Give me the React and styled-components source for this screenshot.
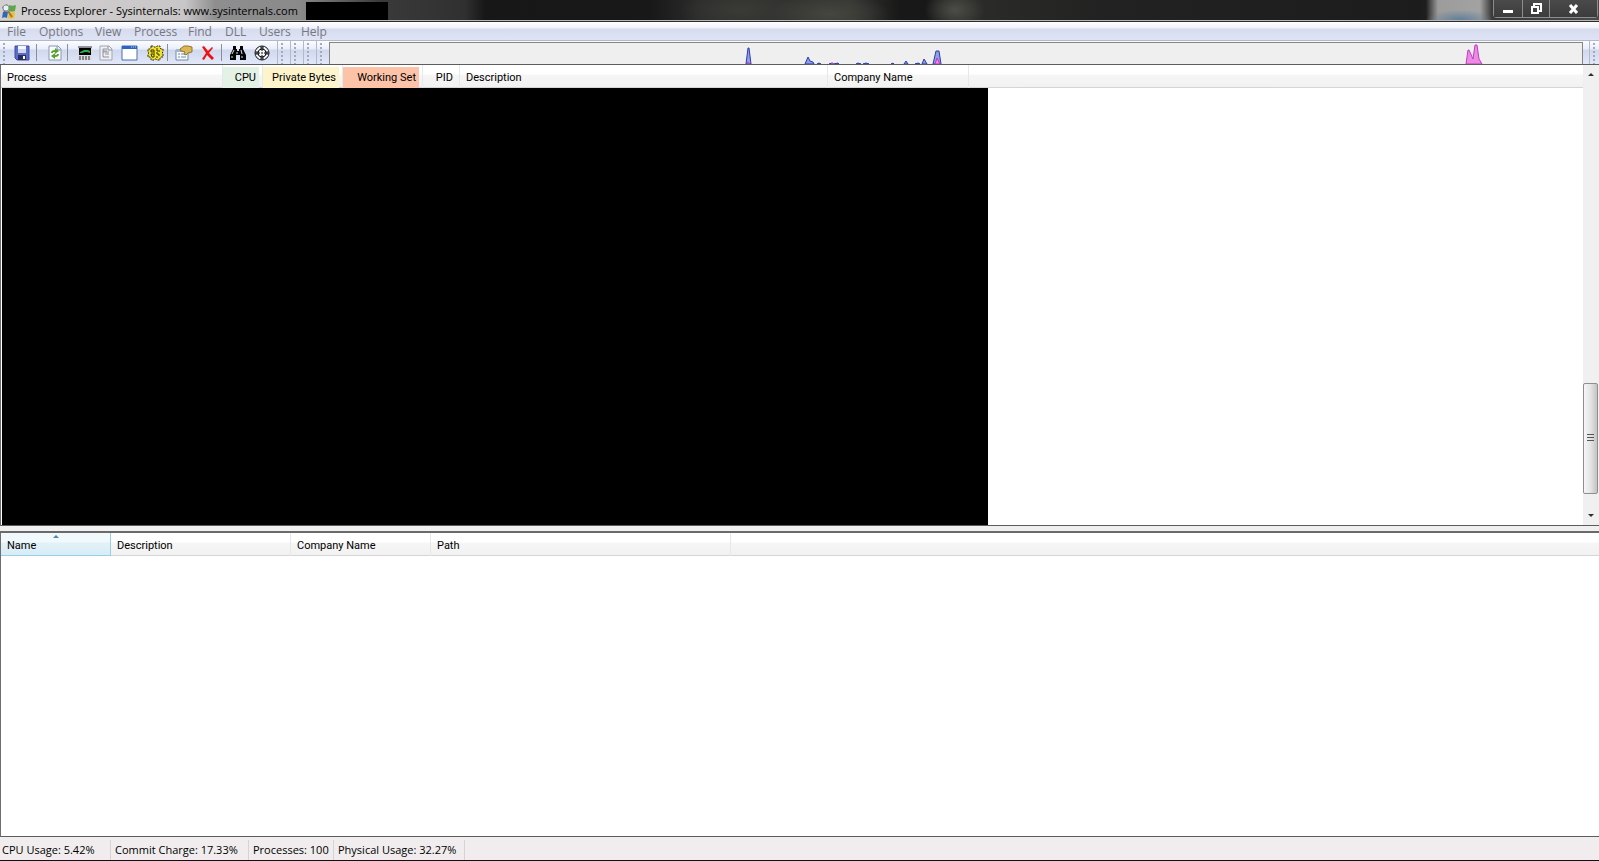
import React from "react";
import styled, { createGlobalStyle } from "styled-components";

const GlobalStyle = createGlobalStyle`
    * {
        box-sizing: border-box;
    }
    body {
        margin: 0;
        background: #ffffff;
        color: #000000;
        font-family: "Open Sans", "Noto Sans", sans-serif;
    }
    button {
        font: inherit;
        color: inherit;
        border: 0;
        padding: 0;
        background: none;
    }
`;

const menus = ["File", "Options", "View", "Process", "Find", "DLL", "Users", "Help"];

const processColumns = [
    { label: "Process", width: 222 },
    { label: "CPU", width: 40, tint: "#e4f1e5", right: true },
    { label: "Private Bytes", width: 80, tint: "#fdf4cb", right: true },
    { label: "Working Set", width: 80, tint: "#fcc3a8", right: true },
    { label: "PID", width: 37, right: true },
    { label: "Description", width: 368 },
    { label: "Company Name", width: 141 },
];

const dllColumns = [
    { label: "Name", width: 110, sorted: true },
    { label: "Description", width: 180 },
    { label: "Company Name", width: 140 },
    { label: "Path", width: 300 },
];

const stats = ["CPU Usage: 5.42%", "Commit Charge: 17.33%", "Processes: 100", "Physical Usage: 32.27%"];

const AppIcon = () => (
    <svg width="16" height="16" viewBox="0 0 16 16" aria-hidden="true">
        <path d="M1 4l5-3 3 5-6 3z" fill="#d85a3c" />
        <path d="M8 2c2 1 4 1 7 0l-1 6c-2 1-4 1-6 0z" fill="#5fa644" />
        <path d="M2 9c2-1 3-1 5 0l-1 6c-2-1-3-1-5 0z" fill="#2f69b4" />
        <path d="M8 9c2 1 4 1 6 0l-1 6c-2 1-4 1-6 0z" fill="#ecc02f" />
        <circle cx="5" cy="5" r="3" fill="#e4f3f8" stroke="#7e979f" />
        <path d="M7 8l4 6" stroke="#a8742a" strokeWidth="2" />
    </svg>
);

const SaveIcon = () => (
    <svg width="16" height="16" viewBox="0 0 16 16" aria-hidden="true">
        <path d="M1 1h14v14H3l-2-2z" fill="#5a6cc9" stroke="#3f4ba3" />
        <path d="M4 1h8v7H4z" fill="#cfd5f1" />
        <path d="M4 1h8v3H4z" fill="#f5f7ff" />
        <path d="M4 10h8v5H4z" fill="#2a2d5c" />
        <path d="M9 11h2v3H9z" fill="#ffffff" />
    </svg>
);

const RefreshIcon = () => (
    <svg width="16" height="16" viewBox="0 0 16 16" aria-hidden="true">
        <path d="M2 1h9l3 3v11H2z" fill="#fbfdfd" stroke="#8799ad" />
        <path d="M10 1v4h4" fill="#dce5ee" stroke="#8799ad" />
        <path d="M5 8c0-2 1-2 3-2" fill="none" stroke="#58a32e" strokeWidth="2" />
        <path d="M8 3l4 3-4 3z" fill="#58a32e" />
        <path d="M11 9c0 2-1 2-3 2" fill="none" stroke="#58a32e" strokeWidth="2" />
        <path d="M8 8v6l-4-3z" fill="#58a32e" />
    </svg>
);

const MonitorIcon = () => (
    <svg width="16" height="16" viewBox="0 0 16 16" aria-hidden="true">
        <path d="M1 2h14v13H1z" fill="#d9dbe0" />
        <path d="M2 3h12v7H2z" fill="#000000" />
        <path d="M1 2h14" stroke="#3a3d44" />
        <path d="M3 7l2-1 2-1h4l2 1v2l-3-1H8L5 8H3z" fill="#22b14c" />
        <path d="M2 12h12M2 14h12" stroke="#26282d" strokeDasharray="2 1" />
    </svg>
);

const TreeIcon = () => (
    <svg width="16" height="16" viewBox="0 0 16 16" aria-hidden="true">
        <path d="M2 1h9l3 3v11H2z" fill="#eef0f5" stroke="#a4a7b0" />
        <path d="M10 1v4h4M5 4h4M5 4v8M5 7h6M7 9h4M5 12h6M5 6h4" fill="none" stroke="#8d9098" />
    </svg>
);

const WindowIcon = () => (
    <svg width="17" height="16" viewBox="0 0 17 16" aria-hidden="true">
        <path d="M1 1h15v14H1z" fill="#ffffff" stroke="#4a6ea8" />
        <path d="M1 1h15v3H1z" fill="#2f63c0" />
        <path d="M10 2h5" stroke="#b7d0f6" strokeDasharray="1 1" />
    </svg>
);

const GearIcon = () => (
    <svg width="17" height="16" viewBox="0 0 17 16" aria-hidden="true">
        <path
            d="M4 1h2l1 1h2l1-1h3v2l1 1h2v3l-1 1 1 1v3h-2l-1 1v2h-3l-1-1H8l-1 1H4v-2l-1-1H1V9l1-1-1-1V4h2l1-1z"
            fill="#efe12b"
            stroke="#2b280c"
            strokeDasharray="2 1"
        />
        <path d="M4 5h3v2H4zM4 9h3v3H5zM10 3v3h3M9 8h2v2h2M9 12h2M7 8h1" fill="none" stroke="#3a350e" />
    </svg>
);

const PropertiesIcon = () => (
    <svg width="18" height="16" viewBox="0 0 18 16" aria-hidden="true">
        <path d="M1 5h12v10H1z" fill="#f7fafc" stroke="#7189a3" />
        <path d="M1 5h12v2H1z" fill="#9fb6cf" />
        <path d="M3 9h2M6 9h5M3 12h2M6 12h5" stroke="#6b8cb0" />
        <path d="M5 4l4-3h4l4 1v5l-4 1-2 2-2-1 1-2-4-1z" fill="#dab754" stroke="#94762f" />
    </svg>
);

const KillIcon = () => (
    <svg width="16" height="16" viewBox="0 0 16 16" aria-hidden="true">
        <path d="M2 2l2-1 4 5 4-4 1 1-4 5 5 5-2 2-5-5-3 5-2-1 4-6z" fill="#ee1111" />
    </svg>
);

const FindIcon = () => (
    <svg width="16" height="16" viewBox="0 0 16 16" aria-hidden="true">
        <path d="M3 1h3v3h1v2h2V4h1V1h3v3l3 6v5h-6v-5H6v5H0v-5l3-6z" fill="#050505" />
        <path d="M4 5l-2 4M7 7v2M11 5l1 4M2 11v2M12 11v2" stroke="#d8dcec" />
    </svg>
);

const TargetIcon = () => (
    <svg width="16" height="16" viewBox="0 0 16 16" aria-hidden="true">
        <circle cx="8" cy="8" r="7" fill="#f3f5fb" stroke="#111111" />
        <circle cx="8" cy="8" r="4" fill="none" stroke="#111111" />
        <path d="M8 1v5M8 10v5M1 8h5M10 8h5" stroke="#111111" />
        <path d="M6 3h4M6 13h4M3 6v4M13 6v4M7 8h2" stroke="#111111" />
    </svg>
);

const tools = [
    [{ name: "Save", icon: SaveIcon, width: 28 }],
    [{ name: "Refresh Now", icon: RefreshIcon, width: 25 }],
    [
        { name: "System Information", icon: MonitorIcon, width: 24 },
        { name: "Show Process Tree", icon: TreeIcon, width: 18 },
        { name: "Show Lower Pane", icon: WindowIcon, width: 28 },
        { name: "View DLLs", icon: GearIcon, width: 24 },
    ],
    [
        { name: "Properties", icon: PropertiesIcon, width: 22 },
        { name: "Kill Process", icon: KillIcon, width: 26 },
    ],
    [
        { name: "Find Handle or DLL", icon: FindIcon, width: 22 },
        { name: "Find Window's Process", icon: TargetIcon, width: 26 },
    ],
];

const HistoryGraph = () => (
    <svg width="100%" height="20" viewBox="0 0 1252 20" preserveAspectRatio="none" aria-label="CPU usage history">
        <g fill="#8f9fe0" stroke="#2a3cae">
            <path d="M416 20l2-16h1l2 16z" />
            <path d="M475 20l3-7 2 4 3 1 1 2z" />
            <path d="M487 20l2-1 2 1zM499 20l3-1 2 1 4-1 1 1zM526 20l2-1 3 1zM533 20l3-1 3 1zM561 20l2-1 1 1zM574 20l2-3 2 3zM585 20l3-1 2 1zM592 20l2-5 3 5z" />
            <path d="M603 20l3-13h3l2 13z" />
        </g>
        <g fill="#ec8be4" stroke="#c03cc0">
            <path d="M417 20l1-2 1 2zM501 20l2-1 1 1zM605 20l2-6 3 6z" />
            <path d="M1136 20l2-14h1l4 9 2-14h2l2 14 3 5z" />
        </g>
    </svg>
);

const ColumnHeads = ({ columns }) => (
    <Table>
        <thead>
            <tr>
                {columns.map((col) => (
                    <HeadCell key={col.label} $width={col.width} $sorted={col.sorted} scope="col">
                        {col.sorted && <SortMark aria-hidden="true" />}
                        <HeadLabel $tint={col.tint} $right={col.right}>
                            {col.label}
                        </HeadLabel>
                    </HeadCell>
                ))}
                <td />
            </tr>
        </thead>
    </Table>
);

const App = () => {
    return (
        <Window>
            <GlobalStyle />
            <TitleBar>
                <AppIcon />
                <Title>Process Explorer - Sysinternals: www.sysinternals.com</Title>
                <TitleCover />
                <WindowButtons>
                    <WindowButton $width={28} aria-label="Minimize">
                        <svg width="12" height="12" viewBox="0 0 12 12">
                            <path d="M1 7h10v3H1z" fill="#ffffff" />
                        </svg>
                    </WindowButton>
                    <WindowButton $width={27} aria-label="Restore">
                        <svg width="12" height="12" viewBox="0 0 12 12">
                            <path d="M4 3V1h7v7H9M2 4h6v6H2z" fill="none" stroke="#ffffff" strokeWidth="2" />
                        </svg>
                    </WindowButton>
                    <WindowButton $width={48} aria-label="Close">
                        <svg width="12" height="12" viewBox="0 0 12 12">
                            <path d="M2 2l7 8M9 2l-7 8" stroke="#ffffff" strokeWidth="3" />
                        </svg>
                    </WindowButton>
                </WindowButtons>
            </TitleBar>
            <MenuBar>
                {menus.map((menu) => (
                    <MenuItem key={menu}>{menu}</MenuItem>
                ))}
            </MenuBar>
            <Toolbar>
                <Grip />
                {tools.map((group) => (
                    <ToolGroup key={group[0].name}>
                        {group.map(({ name, icon: Icon, width }) => (
                            <ToolButton key={name} $width={width} aria-label={name}>
                                <Icon />
                            </ToolButton>
                        ))}
                    </ToolGroup>
                ))}
                <GripRow>
                    <Grip $lined />
                    <Grip $lined />
                    <Grip $lined />
                    <Grip $lined />
                </GripRow>
                <GraphBox>
                    <HistoryGraph />
                </GraphBox>
                <EndGrip $lined />
            </Toolbar>
            <Pane $grow={461}>
                <PaneContent>
                    <ColumnHeads columns={processColumns} />
                    <ListCover />
                </PaneContent>
                <Scrollbar>
                    <ScrollButton aria-label="Scroll up">
                        <Arrow $up />
                    </ScrollButton>
                    <ScrollSpace $grow={302} />
                    <ScrollThumb />
                    <ScrollSpace $grow={13} />
                    <ScrollButton aria-label="Scroll down">
                        <Arrow />
                    </ScrollButton>
                </Scrollbar>
            </Pane>
            <Splitter />
            <Pane $grow={304}>
                <PaneContent>
                    <ColumnHeads columns={dllColumns} />
                </PaneContent>
            </Pane>
            <StatusBar>
                {stats.map((stat) => (
                    <Stat key={stat}>{stat}</Stat>
                ))}
            </StatusBar>
        </Window>
    );
};

const Window = styled.div`
    display: flex;
    flex-direction: column;
    min-height: 100vh;
    border-bottom: 1px solid #101018;
`;

const TitleBar = styled.header`
    display: flex;
    align-items: center;
    height: 22px;
    padding-left: 1px;
    border-bottom: 1px solid #2c2c2c;
    box-shadow: inset 0 -1px #b9b5b8;
    background:
        radial-gradient(ellipse 34px 10px at 1460px 20px, #5f7f99, transparent),
        linear-gradient(90deg, transparent 1426px, #9c9c9c 1438px, #a2a2a2 1480px, transparent 1492px),
        radial-gradient(ellipse 60px 20px at 830px 14px, #45463e, transparent),
        radial-gradient(ellipse 30px 20px at 955px 10px, #4c4d46, transparent),
        radial-gradient(ellipse 60px 20px at 740px 10px, #3a3b36, transparent),
        linear-gradient(90deg, #d2d0d0, #c8c6c6 185px, #8e8e8e 215px, #8a8a8a 300px, #3a3a3a 380px, #303030 465px, #171717 485px, #181818 650px, #2c2c2c 700px, #353533 850px, #181818 900px, #181818 925px, #2c2c2a 960px, #222222 1100px, #1c1c1c 1420px, #383838 1490px, #4a4a4a);
`;

const Title = styled.h1`
    margin: 0 0 0 4px;
    font-size: 11px;
    line-height: 20px;
    font-weight: 400;
    white-space: nowrap;
`;

const TitleCover = styled.div`
    width: 82px;
    height: 18px;
    margin: 0 8px;
    background: #000000;
`;

const WindowButtons = styled.div`
    display: flex;
    align-self: flex-start;
    margin-left: auto;
    margin-right: 1px;
    border: 1px solid #8d8d8d;
    border-top: 0;
    border-radius: 0 0 4px 4px;
`;

const WindowButton = styled.button`
    display: flex;
    align-items: center;
    justify-content: center;
    width: ${(props) => props.$width}px;
    height: 17px;
    background: linear-gradient(#4a4a4a, #3c3c3c);

    & + & {
        border-left: 1px solid #8d8d8d;
    }
`;

const MenuBar = styled.nav`
    display: grid;
    grid-template-columns: 32px 56px 39px 54px 37px 34px 42px auto;
    height: 19px;
    padding-left: 7px;
    border-bottom: 1px solid #b4b8c8;
    background: linear-gradient(#ffffff, #f0f2fa 6px, #d6dbee 7px, #dfe4f5);
`;

const MenuItem = styled.button`
    padding-top: 1px;
    font-size: 12px;
    line-height: 18px;
    color: #76787f;
    text-align: left;
`;

const Toolbar = styled.div`
    display: flex;
    align-items: stretch;
    height: 24px;
    border-bottom: 1px solid #5c5c5c;
    background: linear-gradient(#fbfcff, #eaeefa 8px, #d0d8ee 9px, #e2e8f8);
`;

const Grip = styled.span`
    flex: none;
    width: ${(props) => (props.$lined ? "13px" : "8px")};
    border-left: ${(props) => (props.$lined ? "1px solid #b4b9c8" : "0")};
    background: radial-gradient(circle at 1px 1px, #a4aabb 1px, transparent 1px) 3px 2px / 3px 4px repeat-y;
`;

const GripRow = styled.div`
    display: flex;
    margin-left: 2px;
`;

const EndGrip = styled(Grip)`
    margin-left: 6px;
    width: 10px;
`;

const ToolGroup = styled.div`
    display: flex;
    align-items: center;

    & + & {
        background: linear-gradient(#8a8e9c, #8a8e9c) 0 3px / 1px 17px no-repeat;
        padding-left: 6px;
    }
`;

const ToolButton = styled.button`
    display: flex;
    align-items: center;
    justify-content: center;
    width: ${(props) => props.$width}px;
    height: 22px;
`;

const GraphBox = styled.div`
    flex: 1;
    display: flex;
    align-items: flex-end;
    margin-top: 1px;
    border: 1px solid #858585;
    border-bottom: 0;
    background: #efefef;
`;

const Pane = styled.section`
    display: flex;
    flex: ${(props) => props.$grow} 1 0;
    border-left: 1px solid #6e6e6e;
    border-bottom: 1px solid #5c5c5c;
    background: #ffffff;
`;

const PaneContent = styled.div`
    display: flex;
    flex: 1;
    flex-direction: column;
`;

const Table = styled.table`
    width: 100%;
    table-layout: fixed;
    border-collapse: collapse;
    background: linear-gradient(#ffffff 9px, #f6f6f6 10px, #f1f1f1);
    box-shadow: inset 0 -1px #d5d5d5;
    font-family: Roboto, "Liberation Sans", sans-serif;
    font-size: 11px;

    td {
        padding: 0;
    }
`;

const HeadCell = styled.th`
    position: relative;
    width: ${(props) => props.$width}px;
    padding: 2px 0 0;
    font-weight: 400;
    background: ${(props) => (props.$sorted ? "linear-gradient(#f2f9fc 9px, #e1f1f8 10px, #d8ecf6)" : "none")};
    box-shadow: inset -1px ${(props) => (props.$sorted ? "-1px #96d0e8" : "0 #e8e8e8")};
`;

const HeadLabel = styled.div`
    height: 21px;
    margin-right: ${(props) => (props.$right ? 4 : 1)}px;
    padding: 0 ${(props) => (props.$right ? 3 : 6)}px;
    line-height: 21px;
    text-align: ${(props) => (props.$right ? "right" : "left")};
    background: ${(props) => props.$tint || "none"};
`;

const SortMark = styled.span`
    position: absolute;
    top: 2px;
    left: 50%;
    margin-left: -3px;
    border: 3px solid transparent;
    border-top: 0;
    border-bottom-color: #4b89a8;
`;

const ListCover = styled.div`
    flex: 1;
    width: 62.3%;
    margin-left: 1px;
    background: #000000;
`;

const Scrollbar = styled.div`
    display: flex;
    flex-direction: column;
    width: 16px;
    background: #f0f0f0;
`;

const ScrollButton = styled.button`
    display: flex;
    align-items: center;
    justify-content: center;
    height: 18px;
`;

const Arrow = styled.span`
    border: 3px solid transparent;
    border-${(props) => (props.$up ? "top" : "bottom")}: 0;
    border-${(props) => (props.$up ? "bottom" : "top")}-color: #303030;
`;

const ScrollSpace = styled.div`
    flex: ${(props) => props.$grow} 1 0;
`;

const ScrollThumb = styled.div`
    flex: 110 1 0;
    margin-right: 1px;
    border: 1px solid #8e8e8e;
    border-radius: 2px;
    background:
        repeating-linear-gradient(#555555 0 1px, transparent 1px 3px) center / 7px 8px no-repeat,
        linear-gradient(90deg, #f6f6f6, #e4e4e4 50%, #c4c4c4);
`;

const Splitter = styled.div`
    height: 7px;
    background: #f0f0f0;
    border-bottom: 2px solid #6a6a6a;
`;

const StatusBar = styled.footer`
    display: grid;
    grid-template-columns: 111px 138px 85px 131px;
    align-items: center;
    height: 23px;
    padding-top: 2px;
    background: #f1edee;
    font-size: 11px;
`;

const Stat = styled.div`
    padding-left: 4px;
    border-right: 1px solid #d8d2d4;
    line-height: 20px;
    white-space: nowrap;

    &:first-child {
        padding-left: 2px;
    }
`;

export default App;
